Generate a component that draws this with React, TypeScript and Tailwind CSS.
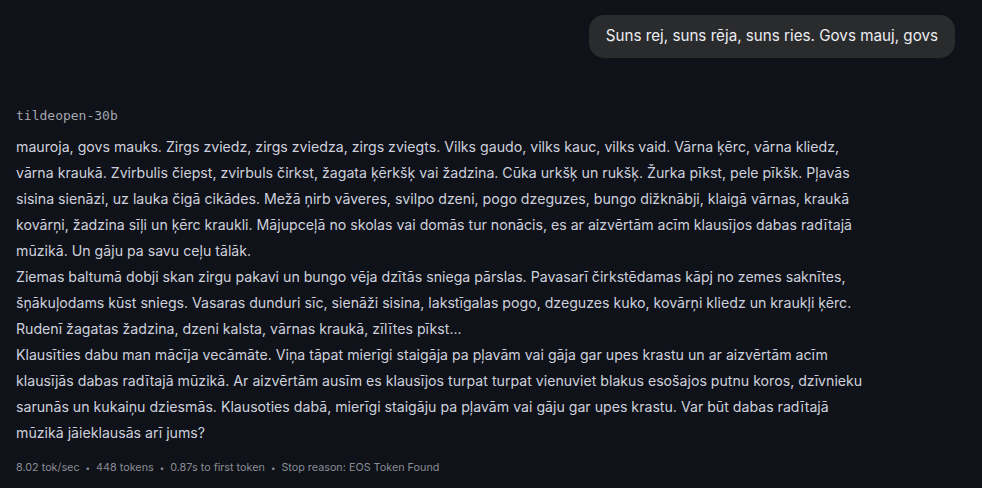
import React from 'react';

const paragraphs: string[][] = [
  [
    'mauroja, govs mauks. Zirgs zviedz, zirgs zviedza, zirgs zviegts. Vilks gaudo, vilks kauc, vilks vaid. Vārna ķērc, vārna kliedz,',
    'vārna kraukā. Zvirbulis čiepst, zvirbuls čirkst, žagata ķērkšķ vai žadzina. Cūka urkšķ un rukšķ. Žurka pīkst, pele pīkšk. Pļavās',
    'sisina sienāzi, uz lauka čigā cikādes. Mežā ņirb vāveres, svilpo dzeni, pogo dzeguzes, bungo dižknābji, klaigā vārnas, kraukā',
    'kovārņi, žadzina sīļi un ķērc kraukli. Mājupceļā no skolas vai domās tur nonācis, es ar aizvērtām acīm klausījos dabas radītajā',
    'mūzikā. Un gāju pa savu ceļu tālāk.',
  ],
  [
    'Ziemas baltumā dobji skan zirgu pakavi un bungo vēja dzītās sniega pārslas. Pavasarī čirkstēdamas kāpj no zemes saknītes,',
    'šņākuļodams kūst sniegs. Vasaras dunduri sīc, sienāži sisina, lakstīgalas pogo, dzeguzes kuko, kovārņi kliedz un kraukļi ķērc.',
    'Rudenī žagatas žadzina, dzeni kalsta, vārnas kraukā, zīlītes pīkst...',
  ],
  [
    'Klausīties dabu man mācīja vecāmāte. Viņa tāpat mierīgi staigāja pa pļavām vai gāja gar upes krastu un ar aizvērtām acīm',
    'klausījās dabas radītajā mūzikā. Ar aizvērtām ausīm es klausījos turpat turpat vienuviet blakus esošajos putnu koros, dzīvnieku',
    'sarunās un kukaiņu dziesmās. Klausoties dabā, mierīgi staigāju pa pļavām vai gāju gar upes krastu. Var būt dabas radītajā',
    'mūzikā jāieklausās arī jums?',
  ],
];

const stats = ['8.02 tok/sec', '448 tokens', '0.87s to first token', 'Stop reason: EOS Token Found'];

export default function App() {
  return (
    <div className="w-[982px] h-[488px] overflow-hidden bg-[#0f1218] font-['Inter',sans-serif] flex flex-col">
      {/* user message */}
      <div className="flex justify-end pt-[15px] pr-[27px]">
        <div className="bg-[#2a2b2d] rounded-[15px] h-[43px] px-[17px] flex items-center text-[15.2px] text-[#eceef2]">
          Suns rej, suns rēja, suns ries. Govs mauj, govs
        </div>
      </div>

      {/* assistant reply */}
      <div className="px-4 pt-[50px]">
        <div className="font-['DejaVu_Sans_Mono',monospace] text-[13px] text-[#a2a6ae] leading-4">tildeopen-30b</div>
        <div className="mt-[10px] text-[14.15px] leading-[26px] text-[#cdd0dc] whitespace-nowrap">
          {paragraphs.map((lines, i) => (
            <p key={i}>
              {lines.map((line, j) => (
                <React.Fragment key={j}>
                  {line}
                  {j < lines.length - 1 && <br />}
                </React.Fragment>
              ))}
            </p>
          ))}
        </div>
        <div className="mt-[14px] flex items-center gap-[6px] text-[10.8px] text-[#8a8d95]">
          {stats.map((s, i) => (
            <React.Fragment key={i}>
              {i > 0 && <span className="text-[8px]">•</span>}
              <span>{s}</span>
            </React.Fragment>
          ))}
        </div>
      </div>
    </div>
  );
}
